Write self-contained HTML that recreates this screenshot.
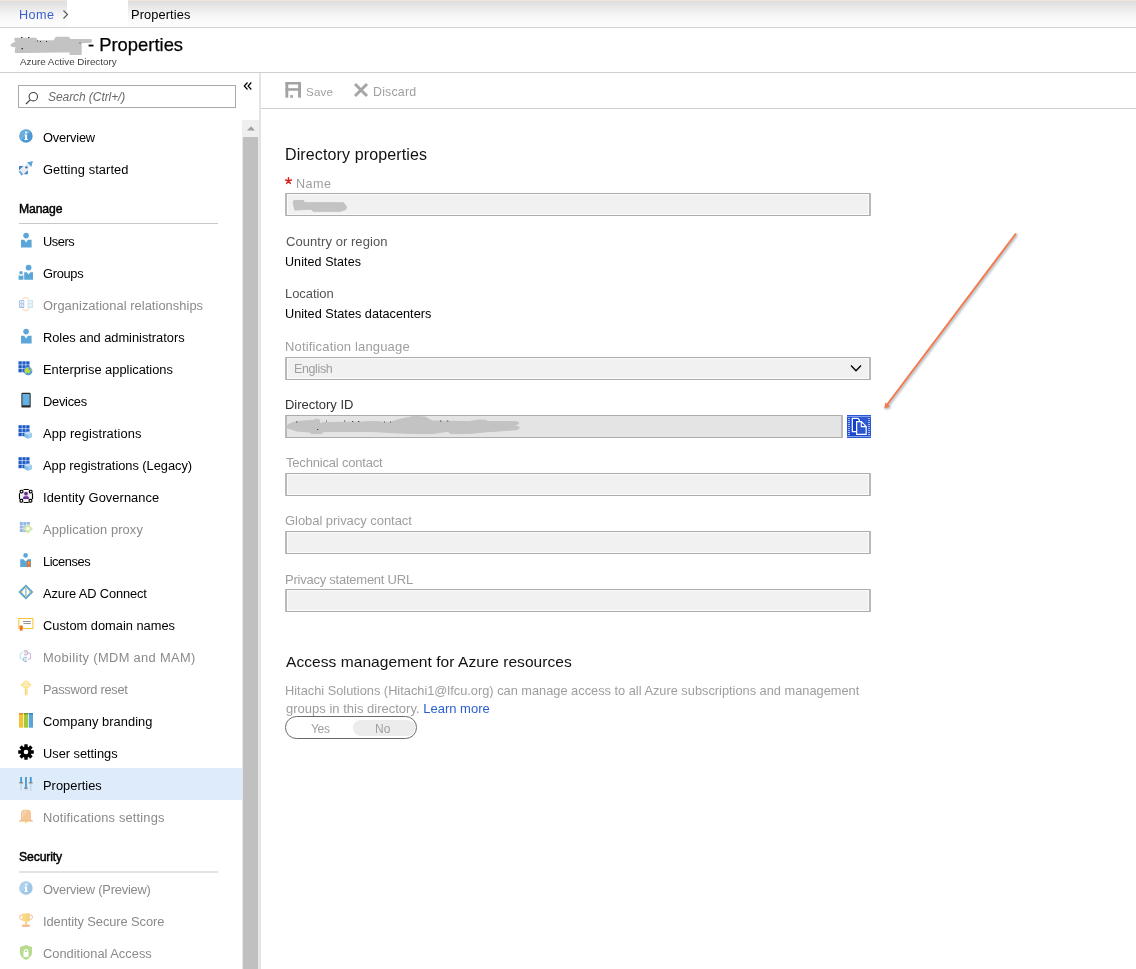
<!DOCTYPE html><html><head><meta charset="utf-8"><style>
*{box-sizing:border-box}
html,body{margin:0;padding:0;width:1136px;height:969px;overflow:hidden;background:#fff;font-family:"Liberation Sans", sans-serif}
.t{position:absolute;white-space:nowrap;will-change:transform}
.a{position:absolute}
.inp{position:absolute;left:285px;width:586px;height:23px;border:solid #acacac;border-width:1px 2px;border-right-color:#b9b9b9;border-left-color:#b9b9b9;border-radius:1px;background:#f1f1f1;box-shadow:inset 0 0 0 1px #fbfbfb}
</style></head><body>
<div class="a" style="left:0;top:0;width:1136px;height:27px;background:linear-gradient(#dcdcdc 0px,#e6e6e6 6px,#f4f4f4 14px,#fbfbfb 22px,#fcfcfc 27px)"></div>
<div class="a" style="left:0;top:0;width:1136px;height:1px;background:#eee4d8"></div>
<div class="a" style="left:0;top:27px;width:1136px;height:1px;background:#d2d2d2"></div>
<div class="a" style="left:67px;top:0;width:61px;height:27px;background:#fff"></div>
<div class="t " style="left:19.2px;top:7.13px;font-size:12.6px;line-height:16px;color:#3a5ed0;;letter-spacing:0.5px;">Home</div>

<svg class="a" style="left:62px;top:9px" width="7" height="11" viewBox="0 0 7 11"><path d="M1.5 1.5 L5.5 5.5 L1.5 9.5" fill="none" stroke="#555" stroke-width="1.1"/></svg>
<div class="t " style="left:131px;top:7.06px;font-size:12.8px;line-height:16px;color:#000;;letter-spacing:0.111px;">Properties</div>

<svg class="a" style="left:0;top:28px" width="100" height="32" viewBox="0 28 100 32"><path d="M15 38.4 L36 38.4 L36.8 40.9 L54.3 40.9 L56 37.5 L68.5 37.5 L70.2 39.6 L91.1 39.6 L91.1 42.1 L81 42.5 L81 54.2 L70.2 54.2 L70.2 51.7 L59.3 51.7 L25 52.2 L15.5 52.2 L15.5 49.6 L16.7 47.1 L11.3 45.9 L11.3 44.6 L16.7 41.7 L15 40Z" fill="#c3c3c3" stroke="#c3c3c3" stroke-width="1.4" stroke-linejoin="round"/><g fill="#333"><rect x="21" y="37" width="1.5" height="1"/><rect x="28" y="37" width="1.5" height="1"/><rect x="37" y="40.5" width="1" height="1"/><rect x="40" y="41" width="1" height="1"/><rect x="46" y="41" width="1" height="1"/><rect x="21.5" y="48" width="1.5" height="1.3"/><rect x="79.5" y="42.5" width="1" height="1"/></g></svg>
<div class="t " style="left:88px;top:33.72px;font-size:18.4px;line-height:22px;color:#000;-webkit-text-stroke:0.25px #000">- Properties</div>

<div class="t " style="left:20px;top:56.10px;font-size:9.8px;line-height:12px;color:#404040;;letter-spacing:0.014px;">Azure Active Directory</div>

<div class="a" style="left:0;top:72px;width:1136px;height:1px;background:#d0d0d0"></div>
<div class="a" style="left:18px;top:85px;width:218px;height:23px;border:1px solid #a9a9a9;background:#fff"></div>
<svg class="a" style="left:25px;top:91px" width="14" height="14" viewBox="0 0 14 14"><circle cx="8.3" cy="5.7" r="4.2" fill="none" stroke="#444" stroke-width="1.1"/><path d="M5.2 8.8 L1 13" stroke="#444" stroke-width="1.2"/></svg>
<div class="t " style="left:48px;top:89.34px;font-size:12px;line-height:16px;color:#6a6a6a;font-style:italic;letter-spacing:-0.071px;">Search (Ctrl+/)</div>

<svg class="a" style="left:243px;top:81px" width="10" height="10" viewBox="0 0 10 10"><path d="M4.5 1.5 L1.3 5 L4.5 8.5 M8.3 1.5 L5.1 5 L8.3 8.5" fill="none" stroke="#000" stroke-width="1.2"/></svg>
<div class="a" style="left:242px;top:120px;width:17px;height:849px;background:#e8e8e8"></div>
<div class="a" style="left:242px;top:120px;width:17px;height:17px;background:#efefef"></div>
<svg class="a" style="left:246px;top:125px" width="10" height="7" viewBox="0 0 10 7"><path d="M1 5.5 L5 1.2 L9 5.5Z" fill="#a0a0a0"/></svg>
<div class="a" style="left:243px;top:137px;width:15px;height:832px;background:#c0c0c0"></div>
<div class="a" style="left:259px;top:73px;width:2px;height:896px;background:#e4e4e4"></div>
<div class="a" style="left:0;top:768px;width:242px;height:32px;background:#deebfb"></div>
<svg class="a" style="left:18px;top:128px;" width="16" height="16" viewBox="0 0 16 16"><circle cx="8" cy="8.1" r="6.7" fill="#4f98d2"/><path d="M3.3 12.8 A6.7 6.7 0 0 1 12.8 3.3Z" fill="#6aaee0"/><rect x="7.1" y="6.6" width="2" height="5.2" fill="#fff"/><rect x="6.3" y="11" width="3.4" height="0.9" fill="#fff"/><rect x="6.5" y="6.6" width="1.5" height="0.8" fill="#fff"/><circle cx="8.2" cy="4.5" r="1.1" fill="#fff"/></svg>

<div class="t " style="left:42.9px;top:130.05px;font-size:12.85px;line-height:16px;color:#000;letter-spacing:-0.199px">Overview</div>

<svg class="a" style="left:18px;top:160px;" width="16" height="16" viewBox="0 0 16 16"><path d="M1 6.1 L5.6 6.1 L1 10.6Z" fill="#3f87c8"/><path d="M5.6 14.2 L9.9 14.2 L9.9 9.9Z" fill="#3f87c8"/><path d="M0.6 11.6 L3.4 15.7 L5.6 14 L2.6 10.6Z" fill="#6aaee0"/><path d="M2.2 10.5 L9 3.3 L12.7 6.8 L5.3 14.2Z" fill="#ececec"/><path d="M9 2.4 L14.9 0.9 L13.4 6.9Z" fill="#5aa5d8"/><circle cx="8.4" cy="7.4" r="1.15" fill="#2a62c9"/></svg>

<div class="t " style="left:42.9px;top:162.25px;font-size:12.85px;line-height:16px;color:#000;letter-spacing:0.086px">Getting started</div>

<svg class="a" style="left:18px;top:232px;" width="16" height="16" viewBox="0 0 16 16"><circle cx="8.1" cy="3.6" r="2.8" fill="#5aa6d9"/><path d="M3 7.8 L6.2 7.8 L8.1 10.4 L10 7.8 L13.6 7.8 L13.6 15.6 L3 15.6Z" fill="#5aa6d9"/></svg>

<div class="t " style="left:42.9px;top:234.05px;font-size:12.85px;line-height:16px;color:#000;letter-spacing:-0.45px">Users</div>

<svg class="a" style="left:18px;top:264px;" width="16" height="16" viewBox="0 0 16 16"><circle cx="10.6" cy="3.6" r="2.9" fill="#5aa6d9"/><path d="M6.2 8.2 L8.8 8.2 L10.6 10.6 L12.4 8.2 L15 8.2 L15 15.7 L6.2 15.7Z" fill="#5aa6d9"/><circle cx="3" cy="8.8" r="1.7" fill="#5aa6d9"/><path d="M0.6 11.4 L2.2 11.4 L3 12.6 L3.8 11.4 L5.4 11.4 L5.4 15.7 L0.6 15.7Z" fill="#5aa6d9"/></svg>

<div class="t " style="left:42.9px;top:266.05px;font-size:12.85px;line-height:16px;color:#000;letter-spacing:-0.3px">Groups</div>

<svg class="a" style="left:18px;top:296px;opacity:0.55;" width="16" height="16" viewBox="0 0 16 16"><rect x="1.1" y="4.1" width="5.1" height="7.9" fill="#5d8fd6"/><rect x="9.5" y="4.1" width="5.5" height="7.9" fill="#9ccbee"/><g fill="#fff" opacity="0.8"><rect x="2" y="5" width="1.4" height="2.4"/><rect x="4" y="5" width="1.4" height="2.4"/><rect x="2" y="8.3" width="1.4" height="2.4"/><rect x="4" y="8.3" width="1.4" height="2.4"/><rect x="10.5" y="5" width="1.6" height="2.4"/><rect x="12.6" y="5" width="1.6" height="2.4"/><rect x="10.5" y="8.3" width="1.6" height="2.4"/><rect x="12.6" y="8.3" width="1.6" height="2.4"/></g><path d="M4.5 3.6 Q5 1.6 7.5 1.6 Q10.2 1.6 10.5 3.4 M4.5 12.4 Q5 14.6 7.8 14.6 Q10.2 14.6 10.6 12.5" fill="none" stroke="#f3a24c" stroke-width="0.9"/></svg>

<div class="t " style="left:42.9px;top:298.05px;font-size:12.85px;line-height:16px;color:#8a8a8a;letter-spacing:0.056px">Organizational relationships</div>

<svg class="a" style="left:18px;top:328px;" width="16" height="16" viewBox="0 0 16 16"><circle cx="8.1" cy="3.6" r="2.8" fill="#5aa6d9"/><path d="M3 7.8 L6.2 7.8 L8.1 10.4 L10 7.8 L13.6 7.8 L13.6 15.6 L3 15.6Z" fill="#5aa6d9"/></svg>

<div class="t " style="left:42.9px;top:330.05px;font-size:12.85px;line-height:16px;color:#000;letter-spacing:-0.022px">Roles and administrators</div>

<svg class="a" style="left:18px;top:360px;" width="16" height="16" viewBox="0 0 16 16"><g fill="#1f5bc6"><rect x="0.50" y="1.30" width="3.3" height="3.3"/><rect x="4.35" y="1.30" width="3.3" height="3.3"/><rect x="8.20" y="1.30" width="3.3" height="3.3"/><rect x="0.50" y="5.15" width="3.3" height="3.3"/><rect x="4.35" y="5.15" width="3.3" height="3.3"/><rect x="8.20" y="5.15" width="3.3" height="3.3"/><rect x="0.50" y="9.00" width="3.3" height="3.3"/><rect x="4.35" y="9.00" width="3.3" height="3.3"/><rect x="8.20" y="9.00" width="3.3" height="3.3"/></g><circle cx="10.1" cy="11" r="4.3" fill="#4e9fd8"/><path d="M7 9 Q8.5 7.2 10.8 7.2 L10.2 9.5 L12.5 10.5 L11.5 13 L9 12.5 L8.2 14.2 Q6.2 12.5 7 9Z M12.5 7.8 Q14.3 9.5 14.2 11.5 L13 10.2Z" fill="#c6d938"/></svg>

<div class="t " style="left:42.9px;top:362.05px;font-size:12.85px;line-height:16px;color:#000;letter-spacing:0.0px">Enterprise applications</div>

<svg class="a" style="left:18px;top:392px;" width="16" height="16" viewBox="0 0 16 16"><rect x="3.4" y="0.8" width="9.3" height="14.8" rx="1.2" fill="#2b2b2b"/><rect x="4.4" y="2" width="7.3" height="11.3" fill="#64b0de"/></svg>

<div class="t " style="left:42.9px;top:394.05px;font-size:12.85px;line-height:16px;color:#000;letter-spacing:-0.266px">Devices</div>

<svg class="a" style="left:18px;top:424px;" width="16" height="16" viewBox="0 0 16 16"><g fill="#1f5bc6"><rect x="0.50" y="1.20" width="3.3" height="3.3"/><rect x="4.35" y="1.20" width="3.3" height="3.3"/><rect x="8.20" y="1.20" width="3.3" height="3.3"/><rect x="0.50" y="5.05" width="3.3" height="3.3"/><rect x="4.35" y="5.05" width="3.3" height="3.3"/><rect x="8.20" y="5.05" width="3.3" height="3.3"/><rect x="0.50" y="8.90" width="3.3" height="3.3"/><rect x="4.35" y="8.90" width="3.3" height="3.3"/><rect x="8.20" y="8.90" width="3.3" height="3.3"/></g><path d="M6.3 9.3 L10.2 7.6 L14 9.3 L14 13 L10.2 14.7 L6.3 13Z" fill="#7fbde6"/><path d="M6.3 9.3 L10.2 11 L14 9.3 L10.2 7.6Z" fill="#c3e1f4"/><path d="M10.2 11 L10.2 14.7 L14 13 L14 9.3Z" fill="#9fcdee"/></svg>

<div class="t " style="left:42.9px;top:426.05px;font-size:12.85px;line-height:16px;color:#000;letter-spacing:0.131px">App registrations</div>

<svg class="a" style="left:18px;top:456px;" width="16" height="16" viewBox="0 0 16 16"><g fill="#1f5bc6"><rect x="0.50" y="1.20" width="3.3" height="3.3"/><rect x="4.35" y="1.20" width="3.3" height="3.3"/><rect x="8.20" y="1.20" width="3.3" height="3.3"/><rect x="0.50" y="5.05" width="3.3" height="3.3"/><rect x="4.35" y="5.05" width="3.3" height="3.3"/><rect x="8.20" y="5.05" width="3.3" height="3.3"/><rect x="0.50" y="8.90" width="3.3" height="3.3"/><rect x="4.35" y="8.90" width="3.3" height="3.3"/><rect x="8.20" y="8.90" width="3.3" height="3.3"/></g><path d="M6.3 9.3 L10.2 7.6 L14 9.3 L14 13 L10.2 14.7 L6.3 13Z" fill="#7fbde6"/><path d="M6.3 9.3 L10.2 11 L14 9.3 L10.2 7.6Z" fill="#c3e1f4"/><path d="M10.2 11 L10.2 14.7 L14 13 L14 9.3Z" fill="#9fcdee"/></svg>

<div class="t " style="left:42.9px;top:458.05px;font-size:12.85px;line-height:16px;color:#000;letter-spacing:-0.032px">App registrations (Legacy)</div>

<svg class="a" style="left:18px;top:488px;" width="16" height="16" viewBox="0 0 16 16"><circle cx="8" cy="8.1" r="4.6" fill="#ececec"/><g fill="none" stroke="#000" stroke-width="1.15" stroke-linecap="round"><path d="M6 1.5 H10.3 M1.5 5.6 V10.6 M14.5 5.6 V10.6 M6 14.5 H10.3"/><rect x="2.2" y="2.2" width="2.7" height="2.7" rx="0.9"/><rect x="11.3" y="2.2" width="2.7" height="2.7" rx="0.9"/><rect x="2" y="11.4" width="2.7" height="2.7" rx="0.9"/><rect x="11.1" y="11.4" width="2.7" height="2.7" rx="0.9"/></g><circle cx="8" cy="5.7" r="1.9" fill="#6a2a9a"/><path d="M5 11 L5.3 9.2 Q5.6 8.2 6.8 8.2 H9.2 Q10.4 8.2 10.7 9.2 L11 11Z" fill="#6a2a9a"/></svg>

<div class="t " style="left:42.9px;top:490.05px;font-size:12.85px;line-height:16px;color:#000;letter-spacing:0.066px">Identity Governance</div>

<svg class="a" style="left:18px;top:520px;opacity:0.55;" width="16" height="16" viewBox="0 0 16 16"><g fill="#3f78d6"><rect x="1.80" y="2.00" width="3.0" height="3.0"/><rect x="5.30" y="2.00" width="3.0" height="3.0"/><rect x="8.80" y="2.00" width="3.0" height="3.0"/><rect x="1.80" y="5.50" width="3.0" height="3.0"/><rect x="5.30" y="5.50" width="3.0" height="3.0"/><rect x="1.80" y="9.00" width="3.0" height="3.0"/><rect x="5.30" y="9.00" width="3.0" height="3.0"/></g><path d="M9.9 3.7 L15 8.7 L9.9 13.7 L4.8 8.7Z" fill="#b7d76a"/><circle cx="9.9" cy="8.7" r="1.6" fill="#fff"/></svg>

<div class="t " style="left:42.9px;top:522.05px;font-size:12.85px;line-height:16px;color:#8a8a8a;letter-spacing:0.125px">Application proxy</div>

<svg class="a" style="left:18px;top:552px;" width="16" height="16" viewBox="0 0 16 16"><circle cx="7.6" cy="3.4" r="2.3" fill="#5aa6d9"/><path d="M2.2 7.3 L5.5 7.3 L7.6 9.5 L9.7 7.3 L13 7.3 L13 15 L2.2 15Z" fill="#5aa6d9"/><circle cx="10.7" cy="10.8" r="2.1" fill="#e8712b"/><path d="M9.2 12 L9 15.6 L10.7 14.4 L12.4 15.6 L12.2 12Z" fill="#e8712b"/><circle cx="10.7" cy="10.8" r="0.9" fill="#f6b36e"/></svg>

<div class="t " style="left:42.9px;top:554.05px;font-size:12.85px;line-height:16px;color:#000;letter-spacing:-0.443px">Licenses</div>

<svg class="a" style="left:18px;top:584px;" width="16" height="16" viewBox="0 0 16 16"><path d="M7.9 0.5 L15.4 8 L7.9 15.5 L0.4 8Z" fill="#5aa6d9"/><path d="M7.9 3.3 L12.6 8 L7.9 12.7 L3.2 8Z" fill="#fff"/><path d="M7.9 3.3 V12.7" stroke="#5aa6d9" stroke-width="1"/><g fill="#f5d23c"><circle cx="7.9" cy="4" r="0.9"/><circle cx="7.9" cy="12" r="0.9"/><circle cx="4" cy="8" r="0.9"/><circle cx="11.8" cy="8" r="0.9"/></g></svg>

<div class="t " style="left:42.9px;top:586.05px;font-size:12.85px;line-height:16px;color:#000;letter-spacing:-0.12px">Azure AD Connect</div>

<svg class="a" style="left:18px;top:616px;" width="16" height="16" viewBox="0 0 16 16"><rect x="0.3" y="2" width="15.1" height="11" fill="#f7c330"/><rect x="1.3" y="3" width="13.1" height="9" fill="#fff"/><path d="M5 5.5 H12.8 M5.5 7.5 H12.8" stroke="#8a8a8a" stroke-width="0.9"/><circle cx="3.2" cy="11" r="1.8" fill="#e8712b"/><path d="M2 12 L1.8 15.2 L3.2 14.2 L4.6 15.2 L4.4 12Z" fill="#e8712b"/></svg>

<div class="t " style="left:42.9px;top:618.05px;font-size:12.85px;line-height:16px;color:#000;letter-spacing:-0.005px">Custom domain names</div>

<svg class="a" style="left:18px;top:648px;opacity:0.55;" width="16" height="16" viewBox="0 0 16 16"><path d="M5.2 3.6 L2.3 6.1 V10.4 L4.6 11.6" fill="none" stroke="#8ec6ea" stroke-width="1.1"/><path d="M10.2 4.8 L12.5 5.8 V10.4 L9.8 11.6" fill="none" stroke="#a678cc" stroke-width="1.1"/><path d="M5.95 3.25 A2.2 2.2 0 1 1 5.95 6.35" fill="none" stroke="#9a62c6" stroke-width="1.1"/><path d="M9.05 9.85 A2.2 2.2 0 1 0 9.05 12.95" fill="none" stroke="#4f7fd8" stroke-width="1.1"/><circle cx="7.5" cy="4.8" r="1" fill="#8cc448"/><circle cx="7.5" cy="11.4" r="1" fill="#8cc448"/></svg>

<div class="t " style="left:42.9px;top:650.05px;font-size:12.85px;line-height:16px;color:#8a8a8a;letter-spacing:0.357px">Mobility (MDM and MAM)</div>

<svg class="a" style="left:18px;top:680px;opacity:0.55;" width="16" height="16" viewBox="0 0 16 16"><path d="M8.1 0.8 L13 4.9 L8.1 8.9 L3.1 4.9Z" fill="#f7cd3c" stroke="#f7cd3c" stroke-width="1.2" stroke-linejoin="round"/><circle cx="8.1" cy="3" r="0.9" fill="#fff"/><rect x="5" y="4.6" width="6.2" height="1.6" fill="#fbe59a"/><path d="M6.7 8.9 H9.8 V14.6 L8.2 15.8 L6.7 14.6Z" fill="#f7cd3c"/><rect x="7" y="9" width="1" height="6" fill="#f0b030"/></svg>

<div class="t " style="left:42.9px;top:682.05px;font-size:12.85px;line-height:16px;color:#8a8a8a;letter-spacing:-0.284px">Password reset</div>

<svg class="a" style="left:18px;top:712px;" width="16" height="16" viewBox="0 0 16 16"><rect x="1" y="1" width="4.2" height="14.7" fill="#f4c430"/><rect x="1" y="1" width="4.2" height="1.5" fill="#f08a20"/><rect x="5.9" y="1" width="4.2" height="14.7" fill="#a5c83a"/><rect x="5.9" y="1" width="4.2" height="1.5" fill="#6a9a2a"/><rect x="10.8" y="1" width="4.2" height="14.7" fill="#5aa6d9"/><rect x="10.8" y="1" width="4.2" height="1.5" fill="#3a80c0"/></svg>

<div class="t " style="left:42.9px;top:714.05px;font-size:12.85px;line-height:16px;color:#000;letter-spacing:0.06px">Company branding</div>

<svg class="a" style="left:18px;top:744px;" width="16" height="16" viewBox="0 0 16 16"><g transform="translate(8 8)"><g fill="#000"><rect x="-1.7" y="-7.8" width="3.4" height="15.6" rx="0.4" transform="rotate(0)"/><rect x="-1.7" y="-7.8" width="3.4" height="15.6" rx="0.4" transform="rotate(45)"/><rect x="-1.7" y="-7.8" width="3.4" height="15.6" rx="0.4" transform="rotate(90)"/><rect x="-1.7" y="-7.8" width="3.4" height="15.6" rx="0.4" transform="rotate(135)"/></g><circle r="5.5" fill="#000"/><circle r="2.3" fill="#fff"/></g></svg>

<div class="t " style="left:42.9px;top:746.05px;font-size:12.85px;line-height:16px;color:#000;letter-spacing:-0.033px">User settings</div>

<svg class="a" style="left:18px;top:776px;" width="16" height="16" viewBox="0 0 16 16"><g fill="#c5dce8"><rect x="2.3" y="1" width="1.7" height="14"/><rect x="7.1" y="1" width="1.7" height="14"/><rect x="11.9" y="1" width="1.7" height="14"/></g><g fill="#3f94d0"><rect x="2.3" y="1" width="1.7" height="5.6"/><rect x="7.1" y="1" width="1.7" height="11"/><rect x="11.9" y="1" width="1.7" height="5.6"/></g><g fill="#7a7a7a"><rect x="1.2" y="6.3" width="3.9" height="1.1"/><rect x="6" y="11.6" width="3.9" height="1.1"/><rect x="10.8" y="6.3" width="3.9" height="1.1"/></g></svg>

<div class="t " style="left:42.9px;top:778.05px;font-size:12.85px;line-height:16px;color:#000;letter-spacing:0.021px">Properties</div>

<svg class="a" style="left:18px;top:808px;" width="16" height="16" viewBox="0 0 16 16"><path d="M1.2 13 L3 11.8 L3 5.5 Q3 1.8 6 1.8 L10 1.8 Q13 1.8 13 5.5 L13 11.8 L14.8 13Z" fill="#f5c796"/><path d="M4 10 L4 5.5 Q4 2.8 7 2.8 L10 2.8Z" fill="#f8d6b0" opacity="0.7"/><rect x="1.3" y="12.4" width="13.4" height="1.1" fill="#e8b488"/><path d="M6.5 13.5 H9.5 L8.6 15.2 H7.4Z" fill="#f7e25a"/></svg>

<div class="t " style="left:42.9px;top:810.05px;font-size:12.85px;line-height:16px;color:#8a8a8a;letter-spacing:0.172px">Notifications settings</div>

<svg class="a" style="left:18px;top:880px;opacity:0.55;" width="16" height="16" viewBox="0 0 16 16"><circle cx="8" cy="8.1" r="6.7" fill="#4f98d2"/><path d="M3.3 12.8 A6.7 6.7 0 0 1 12.8 3.3Z" fill="#6aaee0"/><rect x="7.1" y="6.6" width="2" height="5.2" fill="#fff"/><rect x="6.3" y="11" width="3.4" height="0.9" fill="#fff"/><rect x="6.5" y="6.6" width="1.5" height="0.8" fill="#fff"/><circle cx="8.2" cy="4.5" r="1.1" fill="#fff"/></svg>

<div class="t " style="left:42.9px;top:882.25px;font-size:12.85px;line-height:16px;color:#8a8a8a;letter-spacing:-0.206px">Overview (Preview)</div>

<svg class="a" style="left:18px;top:912px;opacity:0.7;" width="16" height="16" viewBox="0 0 16 16"><path d="M4.2 1.5 L11.8 1.5 L11.8 6.5 Q11.8 9.8 8 9.8 Q4.2 9.8 4.2 6.5Z" fill="#f6cb4a"/><rect x="8" y="1.5" width="3.8" height="8" fill="#f2b85c" opacity="0.6"/><path d="M4.2 3 Q1.2 2.8 1.5 5.2 Q2 7.8 4.8 8.2 M11.8 3 Q14.8 2.8 14.5 5.2 Q14 7.8 11.2 8.2" fill="none" stroke="#f0a060" stroke-width="1"/><rect x="7" y="9.6" width="2" height="3" fill="#f3c050"/><path d="M4.4 12.5 H11.6 V15 H3.8Z" fill="#f0a060"/></svg>

<div class="t " style="left:42.9px;top:914.25px;font-size:12.85px;line-height:16px;color:#8a8a8a;letter-spacing:-0.07px">Identity Secure Score</div>

<svg class="a" style="left:18px;top:944px;opacity:0.58;" width="16" height="16" viewBox="0 0 16 16"><path d="M8 1 L14 3 L14 9 Q14 13.2 8 16 Q2 13.2 2 9 L2 3Z" fill="#86c440"/><rect x="5.5" y="8" width="5" height="5" fill="#fff"/><path d="M6.4 8 L6.4 6.5 Q8 4.8 9.6 6.5 L9.6 8" fill="none" stroke="#fff" stroke-width="1.2"/><circle cx="8" cy="7" r="0.7" fill="#86c440"/></svg>

<div class="t " style="left:42.9px;top:946.05px;font-size:12.85px;line-height:16px;color:#8a8a8a;letter-spacing:0.013px">Conditional Access</div>

<div class="t " style="left:18.6px;top:201.37px;font-size:12.2px;line-height:16px;color:#000;-webkit-text-stroke:0.45px #000;letter-spacing:-0.12px">Manage</div>

<div class="a" style="left:19px;top:223px;width:199px;height:1px;background:#c8c8c8"></div>
<div class="t " style="left:18.6px;top:849.37px;font-size:12.2px;line-height:16px;color:#000;-webkit-text-stroke:0.45px #000;letter-spacing:-0.12px">Security</div>

<div class="a" style="left:19px;top:871px;width:199px;height:2px;background:#e3e3e3"></div>
<svg class="a" style="left:285px;top:81.8px" width="17" height="16" viewBox="0 0 17 16"><g fill="#a3a3a3"><rect x="0.4" y="0" width="2.9" height="15.8" rx="0.7"/><rect x="13.1" y="0" width="2.9" height="15.8" rx="0.7"/><rect x="0.4" y="0" width="15.6" height="2.5" rx="0.7"/><rect x="0.4" y="6.2" width="15.6" height="2.5"/><rect x="5.2" y="13.1" width="2.7" height="2.7"/></g></svg>
<div class="t " style="left:306px;top:84.28px;font-size:11.6px;line-height:16px;color:#a0a0a0;;letter-spacing:0.167px;">Save</div>

<svg class="a" style="left:353px;top:82px" width="16" height="16" viewBox="0 0 16 16"><path d="M2 2 L14 14 M14 2 L2 14" stroke="#a6a6a6" stroke-width="3"/></svg>
<div class="t " style="left:373.3px;top:84.00px;font-size:12.4px;line-height:16px;color:#a0a0a0;;letter-spacing:0.183px;">Discard</div>

<div class="a" style="left:261px;top:108px;width:875px;height:1px;background:#d0d0d0"></div>
<div class="t " style="left:284.5px;top:144.86px;font-size:16px;line-height:20px;color:#111;;letter-spacing:0.121px;">Directory properties</div>

<svg class="a" style="left:282px;top:174px" width="13" height="14" viewBox="0 0 13 14"><path d="M6.5 6.9 L6.50 3.80 M6.5 6.9 L3.55 5.94 M6.5 6.9 L9.45 5.94 M6.5 6.9 L4.68 9.41 M6.5 6.9 L8.32 9.41 " stroke="#d81f1f" stroke-width="1.5" stroke-linecap="round"/></svg>
<div class="t " style="left:296px;top:175.93px;font-size:12.6px;line-height:16px;color:#9e9e9e;;letter-spacing:0.5px;">Name</div>

<div class="inp" style="top:193px"></div>
<svg class="a" style="left:285px;top:195px" width="70" height="20" viewBox="285 195 70 20"><path d="M293.9 200.5 L303.4 200.5 L304.6 202.7 L343.5 202.7 L346.5 206.7 L345.9 209.5 L340.4 211.3 L313.3 211.3 L310.8 209.2 L294.8 210.1 L294.2 207.3 L293.2 202.4Z" fill="#c3c3c3" stroke="#c3c3c3" stroke-width="1" stroke-linejoin="round"/></svg>
<div class="t " style="left:286px;top:233.80px;font-size:13px;line-height:16px;color:#555;;letter-spacing:0.062px;">Country or region</div>

<div class="t " style="left:285px;top:253.77px;font-size:12.5px;line-height:16px;color:#000;;letter-spacing:0.075px;">United States</div>

<div class="t " style="left:285.2px;top:286.20px;font-size:13px;line-height:16px;color:#555;;letter-spacing:-0.071px;">Location</div>

<div class="t " style="left:285px;top:306.30px;font-size:12.7px;line-height:16px;color:#000;;letter-spacing:0.012px;">United States datacenters</div>

<div class="t " style="left:285px;top:338.80px;font-size:13px;line-height:16px;color:#9e9e9e;;letter-spacing:0.16px;">Notification language</div>

<div class="inp" style="top:357px"></div>
<div class="t " style="left:294px;top:361.17px;font-size:12.5px;line-height:16px;color:#9e9e9e;;letter-spacing:-0.384px;">English</div>

<svg class="a" style="left:850px;top:364px" width="12" height="9" viewBox="0 0 12 9"><path d="M1 1.5 L6 6.8 L11 1.5" fill="none" stroke="#000" stroke-width="1.3"/></svg>
<div class="t " style="left:285px;top:397.40px;font-size:13px;line-height:16px;color:#333;;letter-spacing:-0.017px;">Directory ID</div>

<div class="inp" style="top:415px;width:558px;background:#e4e4e4;box-shadow:none"></div>
<svg class="a" style="left:285px;top:414px" width="240" height="24" viewBox="285 414 240 24"><path d="M286.6 425.7 L291.4 423 L297.7 421.4 L313.6 420.4 L315.7 419.3 L319.4 419.9 L319.9 423.6 L324 422.5 L364.3 422 L371.6 421.4 L389.6 422.5 L400 419.3 L413.7 416.4 L425.2 417 L432 421 L468.6 421.6 L480 419.9 L485.8 420.4 L488.1 421.6 L516.7 421.6 L519 423.3 L514.4 425.6 L519.6 427.3 L517.8 429.6 L503 430.7 L484.7 431.9 L468.6 433.6 L450.3 433.6 L448 431.3 L432 433.6 L414.9 433.6 L400 433 L371.6 431.5 L324 431.5 L321 433.6 L311.5 433.6 L309.3 432 L296.7 431 L290.3 428.8 L286.6 427.8Z" fill="#c3c3c3" stroke="#c3c3c3" stroke-width="1" stroke-linejoin="round"/><g fill="#444"><rect x="296" y="421.5" width="1.3" height="1"/><rect x="326" y="420.5" width="1" height="1"/><rect x="344" y="420.5" width="1.3" height="1"/><rect x="352" y="421" width="1.3" height="1"/><rect x="358" y="421" width="1.3" height="1"/><rect x="384" y="421.5" width="1" height="1"/><rect x="390" y="421.5" width="1" height="1"/><rect x="317" y="429" width="1.3" height="1"/><rect x="440" y="420.5" width="1.3" height="1"/><rect x="447" y="420.5" width="1.3" height="1"/></g></svg>
<svg class="a" style="left:847px;top:415px" width="24" height="23" viewBox="0 0 24 23"><rect width="24" height="23" fill="#2a56d4"/><rect x="0" y="1" width="24" height="1" fill="#86a0ea"/><rect x="0" y="21" width="24" height="1" fill="#86a0ea"/><rect x="1" y="3" width="2" height="1" fill="#a8bbf0"/><rect x="21" y="3" width="2" height="1" fill="#a8bbf0"/><rect x="1" y="5" width="2" height="1" fill="#a8bbf0"/><rect x="21" y="5" width="2" height="1" fill="#a8bbf0"/><rect x="1" y="7" width="2" height="1" fill="#a8bbf0"/><rect x="21" y="7" width="2" height="1" fill="#a8bbf0"/><rect x="1" y="9" width="2" height="1" fill="#a8bbf0"/><rect x="21" y="9" width="2" height="1" fill="#a8bbf0"/><rect x="1" y="11" width="2" height="1" fill="#a8bbf0"/><rect x="21" y="11" width="2" height="1" fill="#a8bbf0"/><rect x="1" y="13" width="2" height="1" fill="#a8bbf0"/><rect x="21" y="13" width="2" height="1" fill="#a8bbf0"/><rect x="1" y="15" width="2" height="1" fill="#a8bbf0"/><rect x="21" y="15" width="2" height="1" fill="#a8bbf0"/><rect x="1" y="17" width="2" height="1" fill="#a8bbf0"/><rect x="21" y="17" width="2" height="1" fill="#a8bbf0"/><rect x="1" y="19" width="2" height="1" fill="#a8bbf0"/><rect x="21" y="19" width="2" height="1" fill="#a8bbf0"/><rect x="3" y="2" width="18" height="19" fill="#1b48cf"/><path d="M11 2 L21 2 L21 12Z" fill="#2f5ad4"/></svg>
<svg class="a" style="left:847px;top:415px" width="24" height="23" viewBox="0 0 24 23"><path d="M5.3 3.4 H10.8 L12.4 5 V16.6 H5.3Z" fill="#0f3ecc" stroke="#fff" stroke-width="1.25"/><path d="M9.6 6.6 H14.3 L19.2 11.5 V19.3 H9.6Z" fill="#2a56d4" stroke="#fff" stroke-width="1.25"/><path d="M14.3 6.6 V11.6 H19.2" fill="none" stroke="#fff" stroke-width="1.1"/><path d="M15.3 8.6 V10.6 H17.3Z" fill="#0f3ecc"/></svg>
<div class="t " style="left:286px;top:455.10px;font-size:13px;line-height:16px;color:#9e9e9e;;letter-spacing:-0.188px;">Technical contact</div>

<div class="inp" style="top:473px"></div>
<div class="t " style="left:285px;top:513.10px;font-size:13px;line-height:16px;color:#9e9e9e;;letter-spacing:-0.048px;">Global privacy contact</div>

<div class="inp" style="top:531px"></div>
<div class="t " style="left:285px;top:571.70px;font-size:13px;line-height:16px;color:#9e9e9e;;letter-spacing:-0.24px;">Privacy statement URL</div>

<div class="inp" style="top:589px"></div>
<div class="t " style="left:285.5px;top:652.31px;font-size:15.55px;line-height:20px;color:#111;;letter-spacing:0.042px;">Access management for Azure resources</div>

<div class="t " style="left:285px;top:683.46px;font-size:12.8px;line-height:16px;color:#9e9e9e;">Hitachi Solutions (Hitachi1@lfcu.org) can manage access to all Azure subscriptions and management</div>

<div class="t " style="left:286px;top:700.50px;font-size:13px;line-height:16px;color:#9e9e9e;;letter-spacing:0.005px;">groups in this directory. <span style="color:#2a5fd0">Learn more</span></div>

<div class="a" style="left:285.3px;top:716.3px;width:132px;height:22.8px;border:1.5px solid #6a6a6a;border-radius:11.4px;background:#fff"></div>
<div class="a" style="left:353px;top:720px;width:62px;height:16px;border-radius:8px;background:#ececec"></div>
<div class="t " style="left:310.6px;top:721.04px;font-size:12px;line-height:16px;color:#a0a0a0;letter-spacing:-0.35px">Yes</div>

<div class="t " style="left:374.8px;top:721.04px;font-size:12px;line-height:16px;color:#a0a0a0;">No</div>

<svg class="a" style="left:860px;top:220px" width="180" height="210" viewBox="860 220 180 210"><defs><filter id="sh" x="-20%" y="-20%" width="140%" height="140%"><feGaussianBlur stdDeviation="0.8"/></filter></defs><g transform="translate(1.2 1.2)" opacity="0.45" filter="url(#sh)"><path d="M1016 233.5 L886.5 405.5" stroke="#30506a" stroke-width="2"/><path d="M884.2 408.8 L885.3 402.6 L890 406.2Z" fill="#30506a"/></g><path d="M1016 233.5 L886.5 405.5" stroke="#f57a4c" stroke-width="2"/><path d="M884.2 408.8 L885.3 402.6 L890 406.2Z" fill="#f57a4c"/></svg>
</body></html>
